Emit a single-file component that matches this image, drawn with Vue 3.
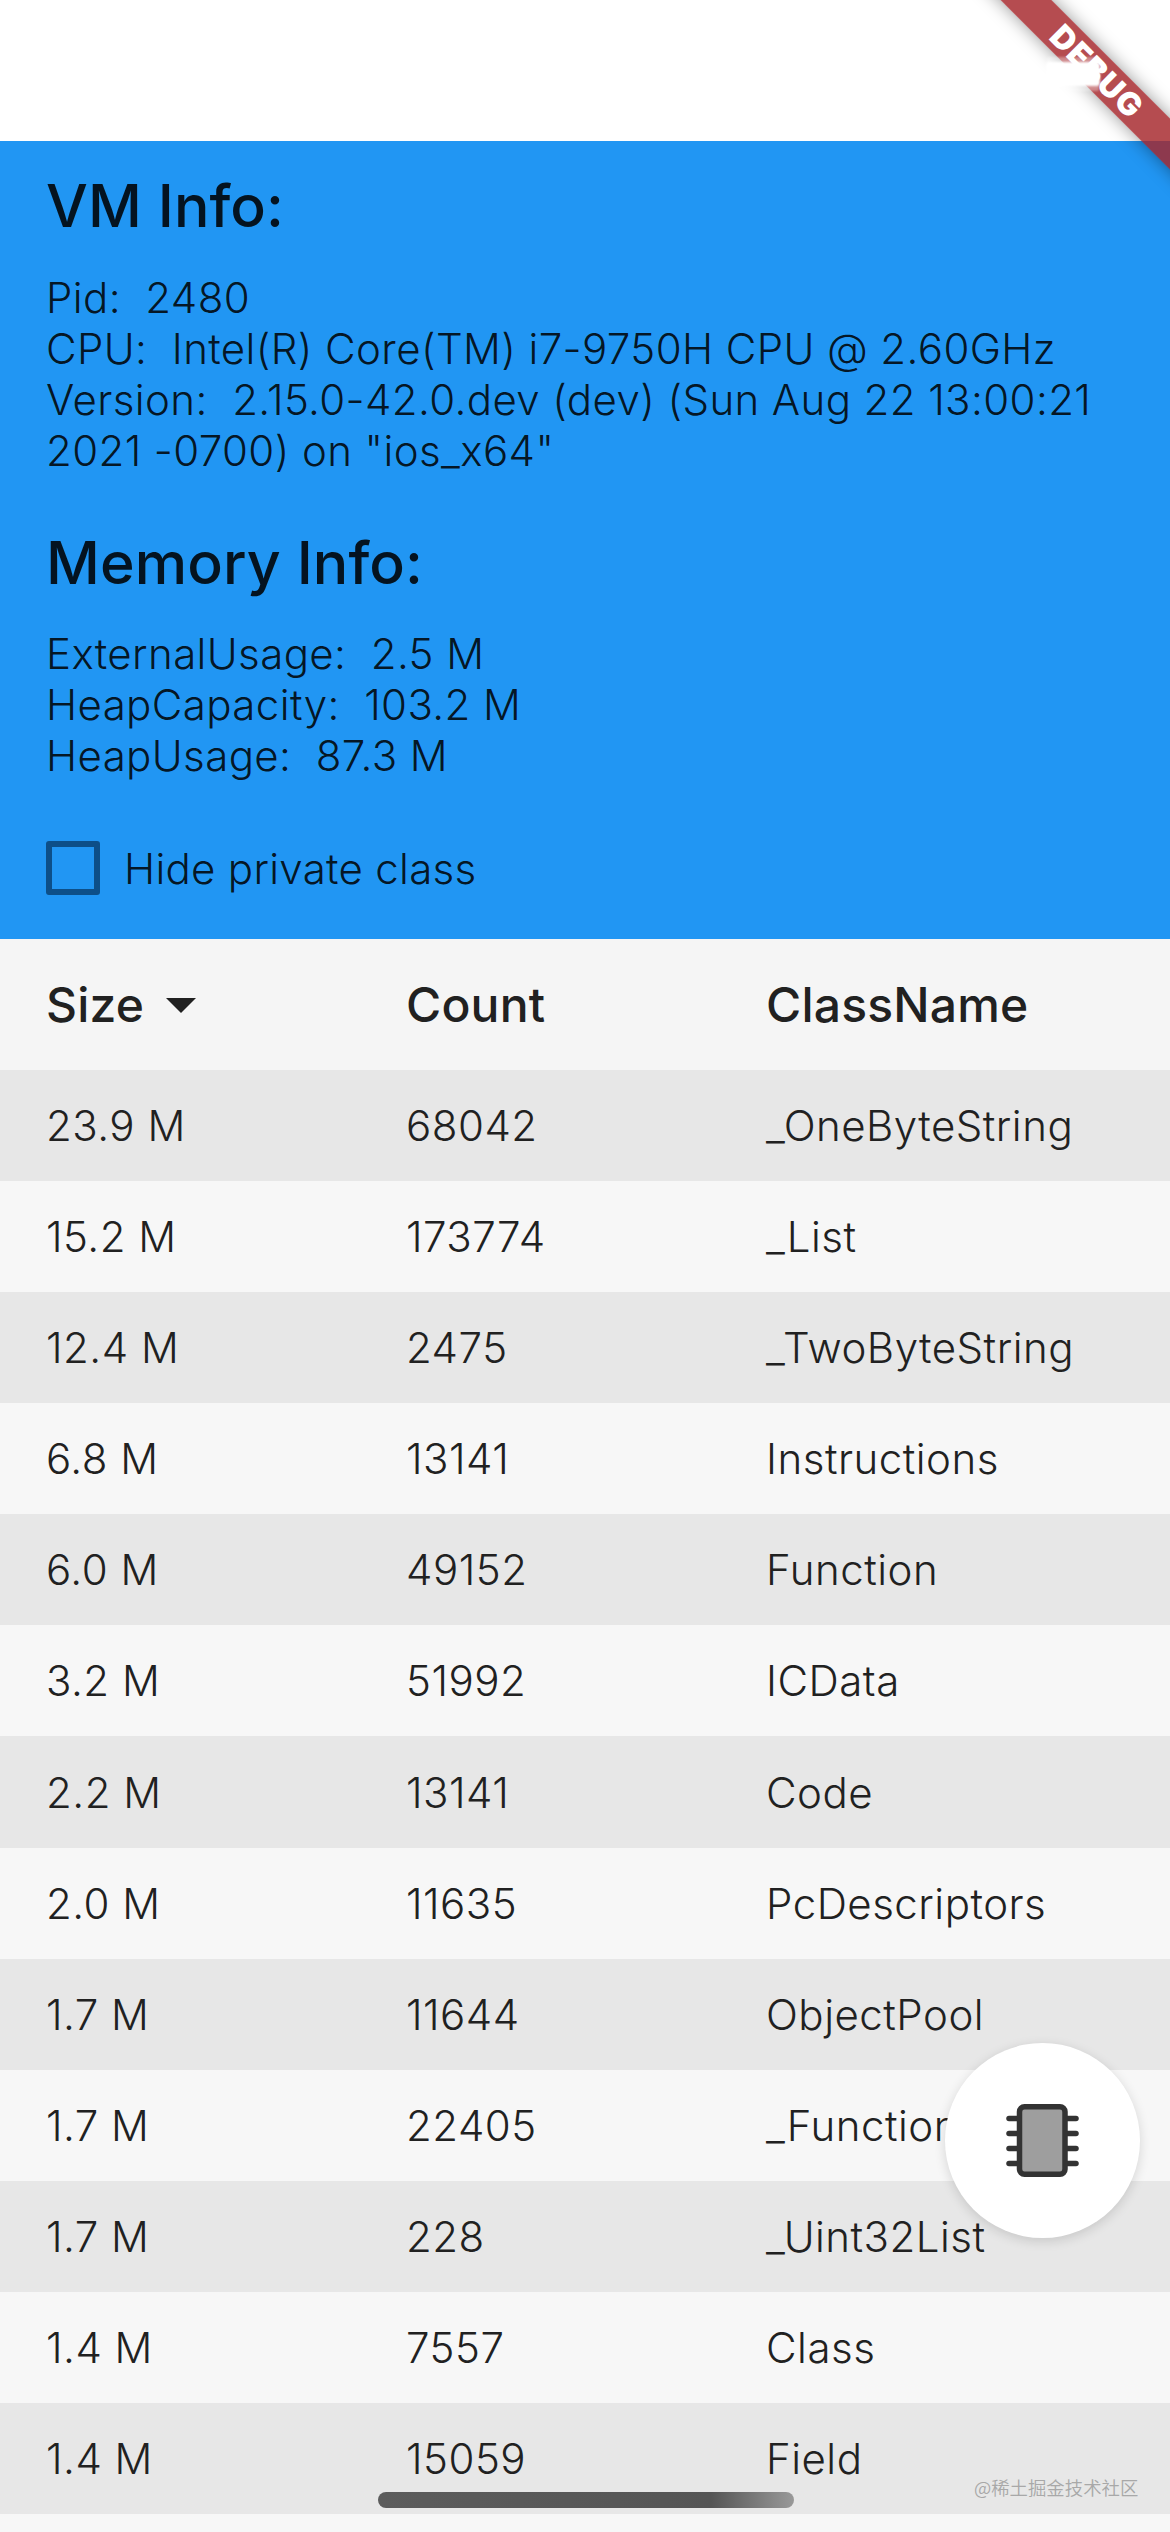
<script setup>
const rows = [
  ['23.9 M', '68042', '_OneByteString'],
  ['15.2 M', '173774', '_List'],
  ['12.4 M', '2475', '_TwoByteString'],
  ['6.8 M', '13141', 'Instructions'],
  ['6.0 M', '49152', 'Function'],
  ['3.2 M', '51992', 'ICData'],
  ['2.2 M', '13141', 'Code'],
  ['2.0 M', '11635', 'PcDescriptors'],
  ['1.7 M', '11644', 'ObjectPool'],
  ['1.7 M', '22405', '_Function'],
  ['1.7 M', '228', '_Uint32List'],
  ['1.4 M', '7557', 'Class'],
  ['1.4 M', '15059', 'Field'],
]
const pins = [2, 17, 32, 47]
</script>

<template>
  <div class="page">
    <div class="status"></div>
    <section class="info">
      <h2 class="title">VM Info:</h2>
      <div class="lines first-lines">
        <div>Pid:&nbsp; 2480</div>
        <div>CPU:&nbsp; Intel(R) Core(TM) i7-9750H CPU @ 2.60GHz</div>
        <div>Version:&nbsp; 2.15.0-42.0.dev (dev) (Sun Aug 22 13:00:21 2021 -0700) on "ios_x64"</div>
      </div>
      <h2 class="title second">Memory Info:</h2>
      <div class="lines second-lines">
        <div>ExternalUsage:&nbsp; 2.5 M</div>
        <div>HeapCapacity:&nbsp; 103.2 M</div>
        <div>HeapUsage:&nbsp; 87.3 M</div>
      </div>
      <label class="check">
        <span class="box"></span>
        <span class="check-text">Hide private class</span>
      </label>
    </section>
    <div class="row head">
      <div class="size-head">Size<span class="tri"></span></div>
      <div>Count</div>
      <div>ClassName</div>
    </div>
    <div v-for="(r, i) in rows" :key="i" class="row" :class="i % 2 ? 'light' : 'dark'">
      <div>{{ r[0] }}</div>
      <div>{{ r[1] }}</div>
      <div>{{ r[2] }}</div>
    </div>

    <div class="fab">
      <svg width="73" height="73" viewBox="0 0 73 73">
        <g stroke="#333" stroke-width="5.5" stroke-linecap="round">
          <line v-for="p in pins" :key="'l' + p" x1="3" x2="14" :y1="p + 12.5" :y2="p + 12.5" />
          <line v-for="p in pins" :key="'r' + p" x1="59" x2="70" :y1="p + 12.5" :y2="p + 12.5" />
        </g>
        <rect x="13.5" y="2.8" width="45.5" height="67.4" rx="5" fill="#9e9e9e" stroke="#333" stroke-width="5.5" />
      </svg>
    </div>

    <div class="ribbon"><span>DEBUG</span></div>
    <div class="glitch"></div>
    <div class="watermark">@稀土掘金技术社区</div>
    <div class="home"></div>
  </div>
</template>

<style scoped>
.page {
  position: relative;
  width: 1170px;
  height: 2532px;
  overflow: hidden;
  background: #f7f7f7;
  font-family: Inter, "Noto Sans", sans-serif;
  font-size: 42px;
  font-weight: 350;
  letter-spacing: 0.5px;
  color: #212121;
}
.status {
  height: 141px;
  background: #fff;
}
.info {
  height: 798px;
  box-sizing: border-box;
  padding: 30px 46px 0;
  background: #2196f3;
  color: rgba(0, 0, 0, 0.87);
  letter-spacing: 0.4px;
}
.title {
  margin: 0;
  font-size: 59px;
  font-weight: 450;
  line-height: 70px;
  letter-spacing: 0.1px;
}
.second {
  margin-top: 52px;
}
.lines {
  line-height: 51px;
}
.first-lines {
  margin-top: 31px;
}
.second-lines {
  margin-top: 30px;
}
.check {
  display: flex;
  align-items: center;
  gap: 24px;
  margin-top: 60px;
}
.check-text {
  letter-spacing: 0.3px;
}
.box {
  box-sizing: border-box;
  width: 54px;
  height: 54px;
  border: 6px solid #0d4f88;
  border-radius: 3px;
}
.row {
  display: grid;
  grid-template-columns: 360px 360px 1fr;
  align-items: center;
  height: 111.08px;
  padding-left: 46px;
  white-space: nowrap;
}
.head {
  height: 131px;
  background: #f5f5f5;
  font-size: 48px;
  font-weight: 500;
  letter-spacing: 0.2px;
}
.size-head {
  display: flex;
  align-items: center;
  gap: 22px;
}
.tri {
  width: 0;
  height: 0;
  margin-top: 2px;
  border-left: 15px solid transparent;
  border-right: 15px solid transparent;
  border-top: 15px solid #212121;
}
.dark {
  background: #e7e7e7;
}
.light {
  background: #f7f7f7;
}
.fab {
  position: absolute;
  left: 945px;
  top: 2043px;
  width: 195px;
  height: 195px;
  display: flex;
  align-items: center;
  justify-content: center;
  border-radius: 50%;
  background: #fff;
  box-shadow: 0 3px 12px rgba(0, 0, 0, 0.14);
}
.glitch {
  position: absolute;
  left: 1046px;
  top: 62px;
  width: 54px;
  height: 24px;
  background: #fff;
  border-radius: 3px;
  filter: blur(1px);
  box-shadow: 0 -6px 0 -1px rgba(255, 255, 255, 0.35), 0 6px 0 -1px rgba(255, 255, 255, 0.35);
}
.ribbon {
  position: absolute;
  left: 910px;
  top: 66px;
  width: 400px;
  height: 36px;
  display: flex;
  align-items: center;
  justify-content: center;
  transform: rotate(45deg);
  background: rgba(165, 36, 41, 0.82);
  box-shadow: 0 0 18px rgba(0, 0, 0, 0.4);
  color: #fff;
  font-size: 32px;
  font-weight: 900;
  letter-spacing: 1px;
}
.ribbon span {
  transform: translateX(-18px);
}
.watermark {
  position: absolute;
  left: 974px;
  top: 2475px;
  font-size: 18.4px;
  line-height: 24px;
  letter-spacing: 0;
  color: #a8a8a8;
  font-family: "Noto Sans CJK SC", sans-serif;
  white-space: nowrap;
}
.home {
  position: absolute;
  left: 378px;
  top: 2492px;
  width: 416px;
  height: 16px;
  border-radius: 8px;
  background: linear-gradient(90deg, #5c5c5c 0%, #555 80%, #999 100%);
}
</style>
